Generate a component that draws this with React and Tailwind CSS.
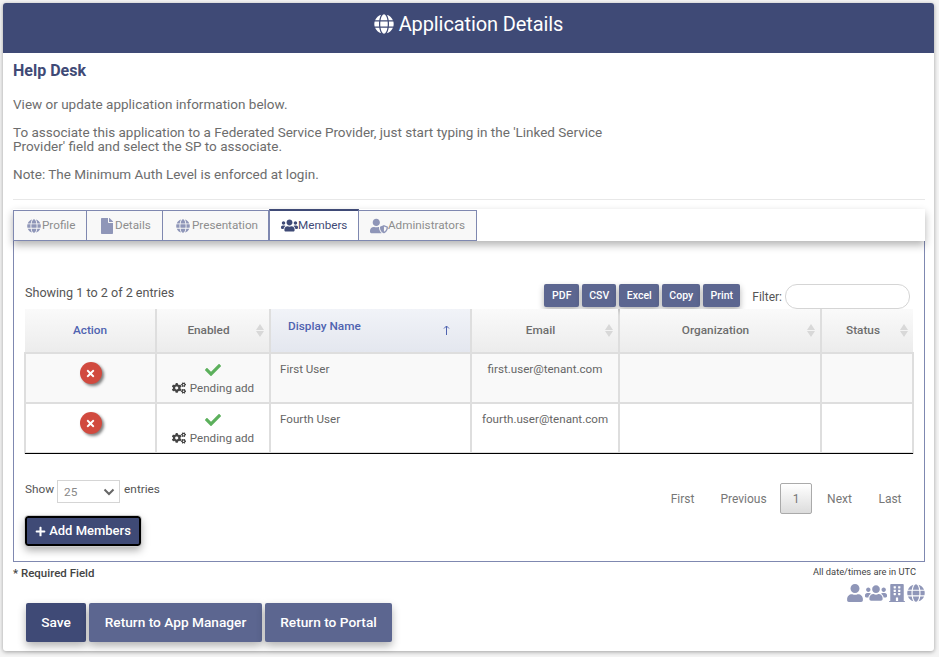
import { FaGlobe, FaFile, FaUsers, FaUserShield, FaCogs, FaCheck, FaPlus, FaBuilding, FaUser, FaTimes } from "react-icons/fa";

const tabs = [
  { label: "Profile", icon: FaGlobe, w: "w-[74px] pl-[13px] gap-[1px]", size: "text-[14px]" },
  { label: "Details", icon: FaFile, w: "w-[76px] pl-[12px]", size: "text-[16px]" },
  { label: "Presentation", icon: FaGlobe, w: "w-[106px] pl-[13px] gap-[2px]", size: "text-[14px]" },
  { label: "Members", icon: FaUsers, w: "w-[90px] pl-[11px]", size: "text-[17px]", active: true },
  { label: "Administrators", icon: FaUserShield, w: "w-[118px] pl-[11px]", size: "text-[18px]" },
];

const columns = [
  { label: "Action", w: "w-[131px]", color: "text-[#4f63b0]" },
  { label: "Enabled", w: "w-[114px]", sort: true, color: "text-[#6d6d6d]" },
  { label: "Display Name", w: "w-[201px]", sorted: true, color: "text-[#4f63b0]" },
  { label: "Email", w: "w-[148px]", sort: true, color: "text-[#6d6d6d]" },
  { label: "Organization", w: "w-[202px]", sort: true, color: "text-[#6d6d6d]" },
  { label: "Status", w: "w-[92px]", sort: true, color: "text-[#6d6d6d]" },
];

const users = [
  { name: "First User", email: "first.user@tenant.com", shaded: true },
  { name: "Fourth User", email: "fourth.user@tenant.com" },
];

const exportButtons = [
  { label: "PDF", w: "w-[35px]" },
  { label: "CSV", w: "w-[34px]" },
  { label: "Excel", w: "w-[40px]" },
  { label: "Copy", w: "w-[38px]" },
  { label: "Print", w: "w-[37px]" },
];

const SortArrows = () => (
  <span className="absolute right-[5px] top-[15px] flex flex-col gap-[1px]">
    <span className="w-0 h-0 border-x-[4px] border-x-transparent border-b-[6px] border-b-[#d8d8d8]" />
    <span className="w-0 h-0 border-x-[4px] border-x-transparent border-t-[6px] border-t-[#d8d8d8]" />
  </span>
);

const App = () => {
  return (
    <div className="h-[657px] w-[939px] overflow-hidden bg-[#f4f4f4] font-['Roboto',sans-serif] text-[13.5px] text-[#6d6d6d]">
      <div className="ml-[3px] mt-[3px] w-[931px] h-[648px] bg-white rounded-[3px] shadow-[0_1px_4px_rgba(0,0,0,0.35)]">
        {/* Title bar */}
        <div className="h-[50px] bg-[#3f4a76] rounded-t-[3px] flex items-center justify-center gap-[5px] text-white text-[20px] tracking-[-0.1px] pb-[8px]">
          <FaGlobe className="text-[20px]" />
          <span>Application Details</span>
        </div>

        <div className="px-[10px]">
          <h2 className="mt-[8px] text-[16px] leading-[20px] font-bold text-[#3f4a76]">Help Desk</h2>
          <p className="mt-[15px] leading-[16px]">View or update application information below.</p>
          <p className="mt-[13px] leading-[14px] w-[600px]">
            To associate this application to a Federated Service Provider, just start typing in the 'Linked Service Provider' field and select the SP to associate.
          </p>
          <p className="mt-[13px] leading-[16px]">Note: The Minimum Auth Level is enforced at login.</p>
          <div className="mt-[17px] h-px w-[912px] bg-[#e8e8e8]" />

          {/* Tabs */}
          <div className="mt-[9px] w-[912px] h-[32px] flex items-end bg-white shadow-[0_4px_8px_rgba(0,0,0,0.3)] relative z-10">
            {tabs.map((tab) => (
              <div
                key={tab.label}
                className={`${tab.w} flex items-center text-[11.7px] ${
                  tab.active
                    ? "h-[32px] bg-white text-[#3f4a76] border-x border-[#7f88b0] border-t-2 border-t-[#3f4a76] border-b border-b-[#7f88b0]"
                    : "h-[31px] bg-[#f8f8f8] text-[#8d8d8d] border border-l-0 first:border-l border-[#7f88b0]"
                }`}
              >
                <tab.icon className={`${tab.size} ${tab.active ? "text-[#3f4a76]" : "text-[#8f96b8]"}`} />
                <span>{tab.label}</span>
              </div>
            ))}
          </div>

          {/* Members panel */}
          <div className="w-[912px] h-[321px] border border-t-0 border-[#7f88b0] px-[11px]">
            <div className="h-[68px] flex items-end justify-between relative">
              <span className="text-[12.6px] leading-[14px] mb-[9px] text-[#555]">Showing 1 to 2 of 2 entries</span>
              <div className="flex items-start mr-[3px]">
                <div className="flex gap-[3px]">
                  {exportButtons.map((b) => (
                    <button key={b.label} className={`${b.w} h-[23px] rounded-[2px] bg-[#5c6690] text-white text-[10.5px] font-medium shadow-[0_3px_6px_rgba(0,0,0,0.3)]`}>
                      {b.label}
                    </button>
                  ))}
                </div>
                <span className="mt-[4px] ml-[12px] mr-[3px] text-[12px] text-[#555]">Filter:</span>
                <input className="w-[125px] h-[25px] bg-white rounded-[12px] border border-[#d5d5d5]" />
              </div>
            </div>

            <table className="table-fixed w-[888px] -ml-[1px] border-collapse">
              <thead>
                <tr className="h-[44px]">
                  {columns.map((col) => (
                    <th
                      key={col.label}
                      className={`${col.w} ${col.color} relative p-0 border-x-2 border-b-2 border-[#dedede] first:border-l-0 last:border-r-0 text-[11.8px] font-medium ${
                        col.sorted ? "bg-gradient-to-b from-[#f1f3f8] to-[#e4e7ef]" : "bg-gradient-to-b from-[#fafafa] to-[#ececec]"
                      }`}
                    >
                      {col.sorted ? (
                        <div className="flex justify-between pl-[17px] pr-[20px] pb-[8px]">
                          <span>{col.label}</span>
                          <svg className="mt-[7px]" width="7" height="10" viewBox="0 0 7 10" fill="none" stroke="#4f63b0" strokeWidth="1">
                            <path d="M3.5 10V1M1 3.5 3.5 1 6 3.5" />
                          </svg>
                        </div>
                      ) : (
                        <span className={col.sort ? "pr-[9px]" : ""}>{col.label}</span>
                      )}
                      {col.sort && <SortArrows />}
                    </th>
                  ))}
                </tr>
              </thead>
              <tbody>
                {users.map((user) => (
                  <tr key={user.name} className={`h-[50px] ${user.shaded ? "bg-[#f9f9f9]" : "bg-white"}`}>
                    <td className="p-0 border-x-2 border-b-2 border-[#dedede]">
                      <div className="flex justify-center">
                        <span className="w-[22px] h-[22px] mb-[10px] rounded-full bg-[#d14a3f] flex items-center justify-center text-white shadow-[2px_2px_3px_rgba(0,0,0,0.5)]">
                          <FaTimes className="text-[11px]" />
                        </span>
                      </div>
                    </td>
                    <td className="p-0 border-x-2 border-b-2 border-[#dedede]">
                      <div className="flex flex-col items-center text-[11.6px] text-[#666]">
                        <FaCheck className="text-[16px] text-[#5cb05c]" />
                        <span className="flex items-center gap-[4px] mt-[3px] leading-[14px]">
                          <FaCogs className="text-[14px] text-[#444]" />
                          Pending add
                        </span>
                      </div>
                    </td>
                    <td className="p-0 pl-[9px] pt-[8px] align-top border-x-2 border-b-2 border-[#dedede] text-[11.6px] leading-[14px] text-[#666]">{user.name}</td>
                    <td className="p-0 pt-[8px] align-top text-center border-x-2 border-b-2 border-[#dedede] text-[11.6px] leading-[14px] text-[#666]">{user.email}</td>
                    <td className="p-0 border-x-2 border-b-2 border-[#dedede]" />
                    <td className="p-0 border-x-2 border-b-2 border-[#dedede]" />
                  </tr>
                ))}
              </tbody>
            </table>
            <div className="w-[888px] h-px -mt-[1px] bg-black relative" />

            <div className="flex justify-between mt-[28px]">
              <div className="flex items-start gap-[3px] text-[11.8px] text-[#555]">
                <span className="leading-[14px]">Show</span>
                <div className="w-[63px] h-[23px] -mt-[2px] border border-[#d5d5d5] bg-white flex items-center justify-between pl-[6px] pr-[4px] text-[#888]">
                  <span className="mt-[2px]">25</span>
                  <svg width="12" height="8" viewBox="0 0 12 8" fill="none" stroke="#666" strokeWidth="2"><path d="M1.5 1.5 6 6l4.5-4.5" /></svg>
                </div>
                <span className="leading-[14px] ml-[1px]">entries</span>
              </div>
              <div className="flex items-start text-[12px] text-[#777] mt-[1px]">
                <span className="w-[49px] h-[31px] flex items-center justify-center">First</span>
                <span className="w-[73px] h-[31px] flex items-center justify-center">Previous</span>
                <span className="w-[32px] h-[31px] flex items-center justify-center rounded-[2px] border border-[#aaa] bg-gradient-to-b from-white to-[#dcdcdc]">1</span>
                <span className="w-[55px] h-[31px] flex items-center justify-center">Next</span>
                <span className="w-[46px] h-[31px] flex items-center justify-center">Last</span>
              </div>
            </div>

            <button className="mt-[2px] w-[116px] h-[30px] rounded-[3px] bg-[#3f4a76] border-2 border-black outline outline-1 outline-[#ccc] text-white text-[13px] font-medium flex items-center justify-center gap-[3px] shadow-[0_4px_8px_rgba(0,0,0,0.35)]">
              <FaPlus className="text-[11px]" />
              Add Members
            </button>
          </div>

          {/* Footer */}
          <div className="flex justify-between w-[912px]">
            <span className="mt-[4px] text-[11.5px] leading-[14px] font-medium text-[#444]">* Required Field</span>
            <div className="flex flex-col items-end">
              <span className="mt-[4px] mr-[9px] text-[9.3px] leading-[12px] text-[#444]">All date/times are in UTC</span>
              <div className="flex items-center gap-[1px] text-[#8f96b8] mt-[4px]">
                <FaUser className="text-[18px]" />
                <FaUsers className="text-[22px]" />
                <FaBuilding className="text-[18px]" />
                <FaGlobe className="text-[18px]" />
              </div>
            </div>
          </div>

          <div className="ml-[13px] -mt-[1px] flex gap-[3px] text-[13.7px] text-white">
            <button className="w-[60px] h-[39px] rounded-[2px] bg-[#3f4a76] font-medium shadow-[0_4px_8px_rgba(0,0,0,0.3)]">Save</button>
            <button className="w-[173px] h-[39px] rounded-[2px] bg-[#5c6690] font-medium shadow-[0_4px_8px_rgba(0,0,0,0.3)]">Return to App Manager</button>
            <button className="w-[127px] h-[39px] rounded-[2px] bg-[#5c6690] font-medium shadow-[0_4px_8px_rgba(0,0,0,0.3)]">Return to Portal</button>
          </div>
        </div>
      </div>
    </div>
  );
};

export default App;
